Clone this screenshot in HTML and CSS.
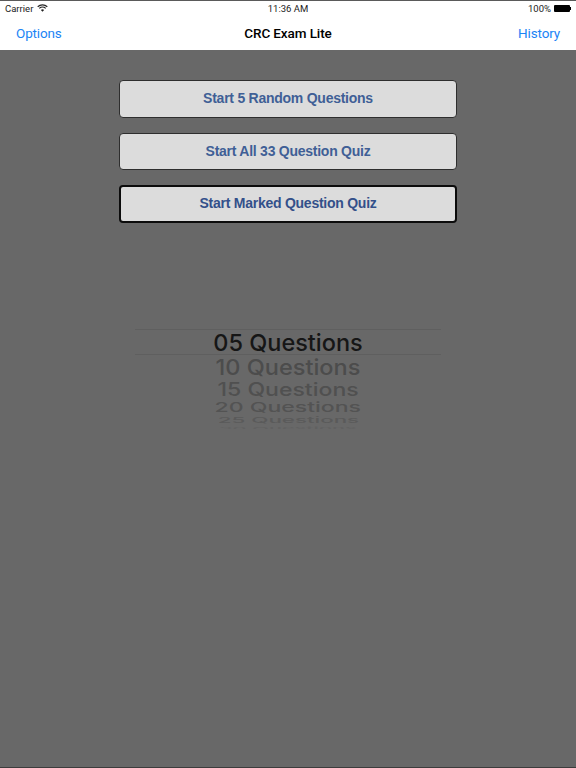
FILE: index.html
```html
<!DOCTYPE html>
<html lang="en">
<head>
<meta charset="utf-8">
<title>CRC Exam Lite</title>
<link rel="stylesheet" href="styles.css">
</head>
<body>
<div class="app">
  <header class="top">
    <div class="status">
      <div class="status-left">
        <span>Carrier</span>
        <svg class="wifi" viewBox="0 0 12 9" width="11" height="8"><path d="M0.6 3.1a7.8 7.8 0 0 1 10.8 0" fill="none" stroke="#222" stroke-width="1.3"/><path d="M2.4 5a5.2 5.2 0 0 1 7.2 0" fill="none" stroke="#222" stroke-width="1.3"/><path d="M4.2 6.8 6 8.7 7.8 6.8a2.6 2.6 0 0 0-3.6 0Z" fill="#222"/></svg>
      </div>
      <div class="status-time">11:36 AM</div>
      <div class="status-right">
        <span>100%</span>
        <span class="battery"><span class="battery-cap"></span></span>
      </div>
    </div>
    <nav class="nav">
      <a class="nav-link">Options</a>
      <div class="nav-title">CRC Exam Lite</div>
      <a class="nav-link">History</a>
    </nav>
  </header>
  <main class="content">
    <div class="buttons">
      <button class="btn">Start 5 Random Questions</button>
      <button class="btn">Start All 33 Question Quiz</button>
      <button class="btn btn-focus">Start Marked Question Quiz</button>
    </div>
    <div class="picker">
      <div class="row row-0"><span>05 Questions</span></div>
      <div class="row row-1"><span>10 Questions</span></div>
      <div class="row row-2"><span>15 Questions</span></div>
      <div class="row row-3"><span>20 Questions</span></div>
      <div class="row row-4"><span>25 Questions</span></div>
      <div class="row row-5"><span>30 Questions</span></div>
    </div>
  </main>
</div>
</body>
</html>
```
FILE: styles.css
```css
* { box-sizing: border-box; }
html, body { margin: 0; padding: 0; }
body { width: 576px; height: 768px; overflow: hidden; background: #686868; }
.app { width: 576px; height: 768px; display: flex; flex-direction: column; border-bottom: 1px solid #3c3c3c; }
.top { height: 50px; flex: none; background: #fff; border-top: 1px solid #5a5a5a; font-family: Roboto, "Liberation Sans", sans-serif; }
.status { height: 14px; padding: 0 5px; display: grid; grid-template-columns: 1fr auto 1fr; align-items: center; font-size: 9.5px; color: #222; }
.status-left { display: flex; align-items: center; gap: 4px; }
.wifi { display: block; }
.status-right { display: flex; justify-content: flex-end; align-items: center; gap: 3px; }
.battery { position: relative; display: block; width: 16px; height: 7px; background: #000; border-radius: 1px; margin-right: 1px; }
.battery-cap { position: absolute; left: 16px; top: 2px; width: 1px; height: 3px; background: #000; }
.nav { height: 35px; padding: 1px 16px 0; display: flex; justify-content: space-between; align-items: center; position: relative; }
.nav-link { font-size: 13.5px; letter-spacing: -0.15px; color: #1b84f5; }
.nav-title { position: absolute; left: 0; right: 0; text-align: center; font-size: 13.5px; letter-spacing: -0.1px; font-weight: 500; color: #000; }
.content { flex: 1; display: flex; flex-direction: column; align-items: center; padding-top: 30px; }
.buttons { display: flex; flex-direction: column; gap: 15px; }
.btn { display: block; width: 338px; height: 37.5px; margin: 0; padding: 0 0 1px; background: #dcdcdc; border: 1px solid #2e2e2e; border-radius: 4px; font-family: "Liberation Sans", sans-serif; font-weight: 700; font-size: 14px; letter-spacing: -0.25px; color: #3f5f96; }
.btn-focus { border: 2px solid #0c0c0c; color: #33508a; }
.picker { width: 306px; margin-top: 106px; font-family: Inter, "Liberation Sans", sans-serif; font-weight: 500; color: #161616; }
.row { display: flex; justify-content: center; align-items: center; overflow: hidden; white-space: nowrap; font-size: 23.5px; }
.row span { display: block; }
.row-0 { height: 24px; border-top: 1px solid #5f5f5f; border-bottom: 1px solid #5f5f5f; box-sizing: content-box; }
.row-0 span { padding-top: 2px; }
.row-1 { height: 25px; color: #4c4c4c; }
.row-1 span { transform: scale(1, 0.92); }
.row-2 { height: 20px; color: #505050; }
.row-2 span { transform: scale(0.98, 0.78); }
.row-3 { height: 16px; color: #535353; }
.row-3 span { transform: scale(0.98, 0.56); }
.row-4 { height: 10px; color: #5a5a5a; }
.row-4 span { transform: scale(0.95, 0.34); }
.row-5 { height: 3px; color: #616161; align-items: flex-start; }
.row-5 span { transform: scale(0.92, 0.16); transform-origin: center top; }
```
